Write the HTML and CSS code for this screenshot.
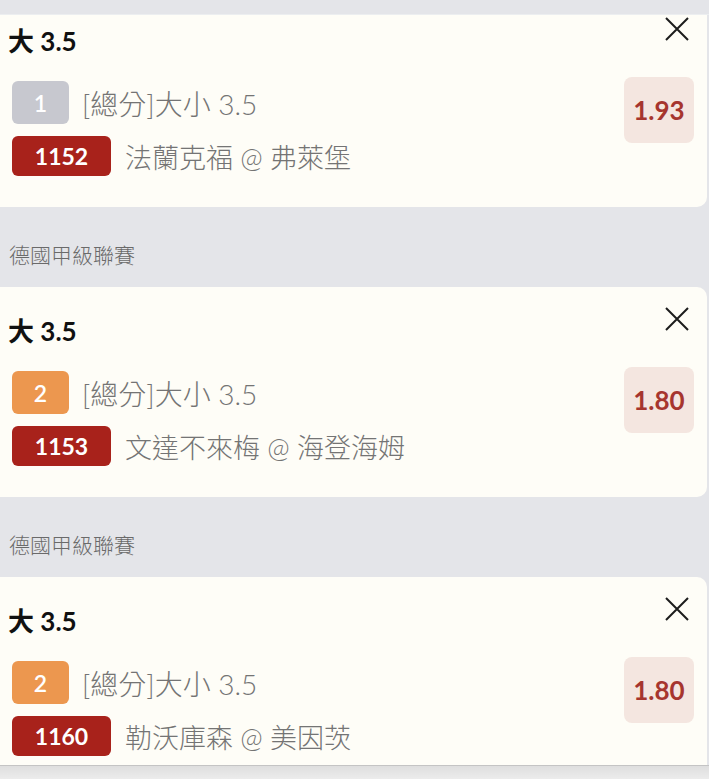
FILE: index.html
```html
<!DOCTYPE html>
<html lang="zh-Hant">
<head>
    <meta charset="UTF-8">
    <meta name="viewport" content="width=device-width, initial-scale=1.0">
    <title>投注單</title>
    <link rel="stylesheet" href="styles.css">
</head>
<body>
    <div class="top-strip"></div>

    <div class="bet-list">
        <div class="card first">
            <div class="card-main">
                <div class="pick">大 3.5</div>
                <div class="line">
                    <span class="tag tag-gray">1</span>
                    <span class="market">[總分]大小 3.5</span>
                </div>
                <div class="line line-match">
                    <span class="code">1152</span>
                    <span class="match">法蘭克福 @ 弗萊堡</span>
                </div>
            </div>
            <div class="card-side">
                <svg class="close" width="24" height="24" viewBox="0 0 24 24">
                    <path d="M1 1 L23 23 M23 1 L1 23" stroke="#1c1c1c" stroke-width="2" fill="none"/>
                </svg>
                <div class="odds">1.93</div>
            </div>
        </div>

        <div class="league">德國甲級聯賽</div>

        <div class="card">
            <div class="card-main">
                <div class="pick">大 3.5</div>
                <div class="line">
                    <span class="tag tag-orange">2</span>
                    <span class="market">[總分]大小 3.5</span>
                </div>
                <div class="line line-match">
                    <span class="code">1153</span>
                    <span class="match">文達不來梅 @ 海登海姆</span>
                </div>
            </div>
            <div class="card-side">
                <svg class="close" width="24" height="24" viewBox="0 0 24 24">
                    <path d="M1 1 L23 23 M23 1 L1 23" stroke="#1c1c1c" stroke-width="2" fill="none"/>
                </svg>
                <div class="odds">1.80</div>
            </div>
        </div>

        <div class="league">德國甲級聯賽</div>

        <div class="card">
            <div class="card-main">
                <div class="pick">大 3.5</div>
                <div class="line">
                    <span class="tag tag-orange">2</span>
                    <span class="market">[總分]大小 3.5</span>
                </div>
                <div class="line line-match">
                    <span class="code">1160</span>
                    <span class="match">勒沃庫森 @ 美因茨</span>
                </div>
            </div>
            <div class="card-side">
                <svg class="close" width="24" height="24" viewBox="0 0 24 24">
                    <path d="M1 1 L23 23 M23 1 L1 23" stroke="#1c1c1c" stroke-width="2" fill="none"/>
                </svg>
                <div class="odds">1.80</div>
            </div>
        </div>
    </div>

    <div class="bottom-strip"></div>
</body>
</html>
```

FILE: styles.css
```css
body {
    margin: 0;
    background-color: #e4e5e9;
    font-family: Lato, "Noto Sans CJK TC", sans-serif;
    height: 779px;
    overflow: hidden;
}

/* strips laid over the scrolled list */
.top-strip {
    position: fixed;
    top: 0;
    left: 0;
    right: 0;
    height: 14px;
    background-color: #e4e5e9;
    border-bottom: 1px solid #eceef0;
    z-index: 2;
}

.bottom-strip {
    position: fixed;
    bottom: 0;
    left: 0;
    right: 0;
    height: 13px;
    border-top: 1px solid #c4c4c4;
    background: linear-gradient(#dedede, #ececec);
    z-index: 2;
}

.bet-list {
    display: flex;
    flex-direction: column;
}

.card {
    display: flex;
    justify-content: space-between;
    width: 707px;
    background-color: #fefdf7;
    border-radius: 0 10px 10px 0;
}

.card.first {
    margin-top: -3px;
}

.card-main {
    display: flex;
    flex-direction: column;
    padding: 28px 0 31px 0;
}

.pick {
    font-size: 26px;
    font-weight: bold;
    line-height: 32px;
    color: #111;
    padding-left: 8px;
    margin-bottom: 24px;
}

.line {
    display: flex;
    align-items: center;
    padding-left: 12px;
}

.line-match {
    margin-top: 12px;
}

.tag {
    display: flex;
    align-items: center;
    justify-content: center;
    width: 57px;
    height: 43px;
    border-radius: 6px;
    color: #fff;
    font-size: 23px;
    font-weight: 600;
}

.tag-gray {
    background-color: #c7c8cf;
}

.tag-orange {
    background-color: #ec974f;
}

.market {
    margin-left: 13px;
    font-size: 28px;
    font-weight: 300;
    color: #747474;
}

.code {
    display: flex;
    align-items: center;
    justify-content: center;
    width: 99px;
    height: 40px;
    border-radius: 6px;
    background-color: #a8221b;
    color: #fff;
    font-size: 23px;
    font-weight: bold;
}

.match {
    margin-left: 14px;
    font-size: 27px;
    font-weight: 300;
    color: #747474;
}

.card-side {
    display: flex;
    flex-direction: column;
    align-items: flex-end;
    padding: 20px 13px 0 0;
}

.close {
    margin-right: 5px;
}

.odds {
    display: flex;
    align-items: center;
    justify-content: center;
    width: 70px;
    height: 66px;
    margin-top: 36px;
    border-radius: 8px;
    background-color: #f4e6e0;
    color: #a6352e;
    font-size: 26px;
    font-weight: bold;
}

.league {
    margin: 33px 0 17px 0;
    padding-left: 9px;
    font-size: 21px;
    font-weight: 300;
    line-height: 30px;
    color: #6a6a6a;
}
```
